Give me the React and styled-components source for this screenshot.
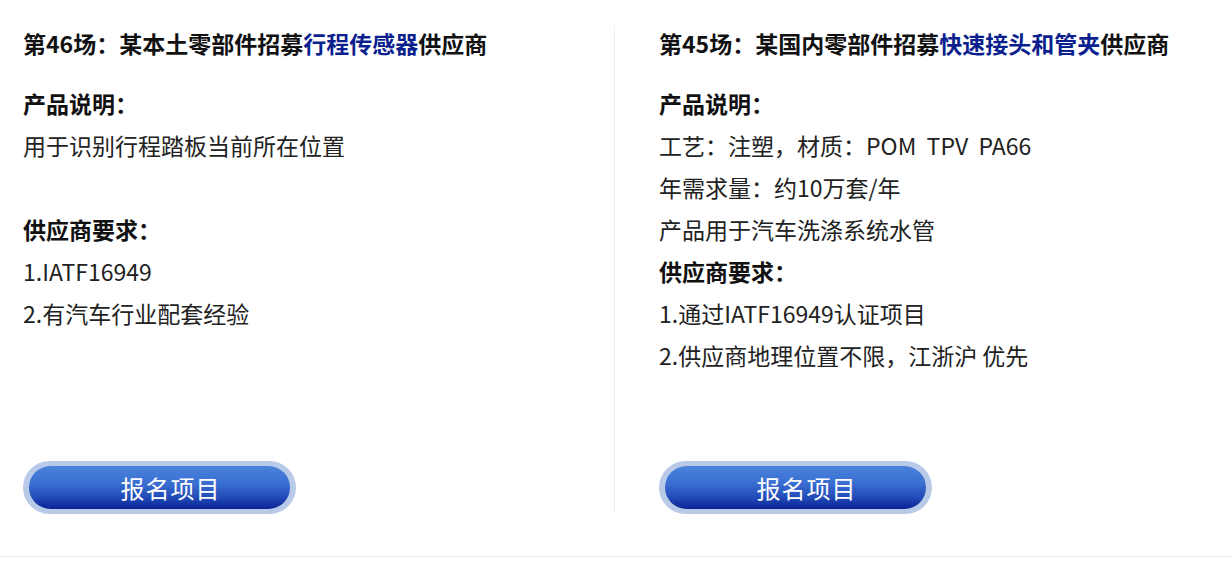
import React from 'react';
import styled, { createGlobalStyle } from 'styled-components';

const GlobalStyle = createGlobalStyle`
  body {
    margin: 0;
    background: #fff;
    font-family: "Noto Sans CJK SC", "Noto Sans", sans-serif;
  }
`;

const projects = [
  {
    id: 46,
    prefix: '第46场：某本土零部件招募',
    highlight: '行程传感器',
    suffix: '供应商',
    desc: ['用于识别行程踏板当前所在位置', ''],
    reqs: ['1.IATF16949', '2.有汽车行业配套经验'],
  },
  {
    id: 45,
    prefix: '第45场：某国内零部件招募',
    highlight: '快速接头和管夹',
    suffix: '供应商',
    desc: ['工艺：注塑，材质：POM  TPV  PA66', '年需求量：约10万套/年', '产品用于汽车洗涤系统水管'],
    reqs: ['1.通过IATF16949认证项目', '2.供应商地理位置不限，江浙沪 优先'],
  },
];

function App() {
  return (
    <>
      <GlobalStyle />
      <Page>
        <List>
          {projects.map((p, i) => (
            <Card key={p.id} $first={i === 0}>
              <Title>
                {p.prefix}
                <Highlight>{p.highlight}</Highlight>
                {p.suffix}
              </Title>
              <Heading>产品说明：</Heading>
              {p.desc.map((line, k) => (
                <Line key={k}>{line || '\u00a0'}</Line>
              ))}
              <Heading>供应商要求：</Heading>
              {p.reqs.map((line, k) => (
                <Line key={k}>{line}</Line>
              ))}
              <Button>
                <ButtonInner>报名项目</ButtonInner>
              </Button>
            </Card>
          ))}
        </List>
      </Page>
    </>
  );
}

const Page = styled.div`
  width: 1232px;
  height: 562px;
  box-sizing: border-box;
  padding-top: 25px;
`;

const List = styled.div`
  display: grid;
  grid-template-columns: 614px 618px;
  border-bottom: 1px solid #ededed;
  padding-bottom: 42px;
`;

const Card = styled.div`
  display: flex;
  flex-direction: column;
  height: 489px;
  box-sizing: border-box;
  padding-left: ${(p) => (p.$first ? '23px' : '44px')};
  border-left: ${(p) => (p.$first ? 'none' : '1px solid #eeeeee')};
`;

const Title = styled.div`
  font-size: 23px;
  font-weight: 700;
  line-height: 42px;
  color: #111;
  margin: -3px 0 18px;
  white-space: nowrap;
`;

const Highlight = styled.span`
  color: #0c1f8f;
`;

const Heading = styled.div`
  font-size: 23px;
  font-weight: 700;
  line-height: 42px;
  color: #111;
`;

const Line = styled.div`
  font-size: 23px;
  line-height: 42px;
  color: #222;
  white-space: pre;
`;

const Button = styled.button`
  margin-top: auto;
  width: 273px;
  height: 53px;
  padding: 5px 6px;
  border: none;
  border-radius: 27px;
  background: #b8cae7;
  cursor: pointer;
  box-sizing: border-box;
`;

const ButtonInner = styled.div`
  height: 100%;
  padding-left: 22px;
  border-radius: 22px;
  background: linear-gradient(180deg, #4a82db 0%, #3a6fd2 40%, #2049b5 75%, #0a2394 100%);
  color: #fff;
  font-family: "Noto Sans CJK SC", sans-serif;
  font-size: 24px;
  line-height: 43px;
  letter-spacing: 1px;
  text-align: center;
`;

export default App;
